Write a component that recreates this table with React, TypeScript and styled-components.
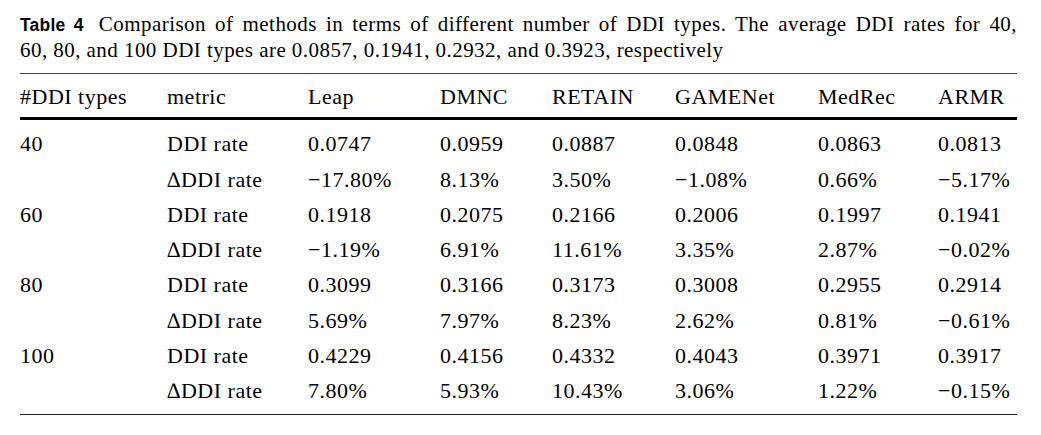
import React from "react";
import styled, { createGlobalStyle } from "styled-components";

const GlobalStyle = createGlobalStyle`
  html, body {
    margin: 0;
    padding: 0;
    background: #fff;
  }
`;

const COLS = "147px 141px 132px 112px 123px 143px 120px 79px";

const Page = styled.div`
  box-sizing: border-box;
  width: 1041px;
  padding: 12px 24px 0 20px;
  color: #000;
  font-family: "Liberation Serif", "Times New Roman", serif;
`;

const Caption = styled.div`
  font-size: 21px;
  line-height: 25px;
  letter-spacing: 0.45px;
`;

const CaptionLine = styled.div<{ $justify?: boolean }>`
  white-space: nowrap;
  text-align: ${(p) => (p.$justify ? "justify" : "left")};
  text-align-last: ${(p) => (p.$justify ? "justify" : "left")};
`;

const Label = styled.span`
  font-family: "Liberation Sans", Arial, sans-serif;
  font-weight: 700;
  font-size: 17.5px;
  letter-spacing: 0.2px;
  margin-right: 15px;
`;

const Table = styled.div`
  margin-top: 10px;
  border-top: 1px solid #444;
  border-bottom: 1px solid #222;
  font-size: 22px;
  letter-spacing: 0.5px;
`;

const Row = styled.div`
  display: grid;
  grid-template-columns: ${COLS};
  line-height: 35.3px;
`;

const Head = styled.div`
  padding: 5px 0 3px;
  border-bottom: 3px solid #000;
`;

const Body = styled.div`
  padding: 6px 0 5px;
`;

const Cell = styled.div`
  white-space: nowrap;
`;

const methods = ["Leap", "DMNC", "RETAIN", "GAMENet", "MedRec", "ARMR"];

const groups = [
  {
    n: "40",
    rate: ["0.0747", "0.0959", "0.0887", "0.0848", "0.0863", "0.0813"],
    delta: ["−17.80%", "8.13%", "3.50%", "−1.08%", "0.66%", "−5.17%"],
  },
  {
    n: "60",
    rate: ["0.1918", "0.2075", "0.2166", "0.2006", "0.1997", "0.1941"],
    delta: ["−1.19%", "6.91%", "11.61%", "3.35%", "2.87%", "−0.02%"],
  },
  {
    n: "80",
    rate: ["0.3099", "0.3166", "0.3173", "0.3008", "0.2955", "0.2914"],
    delta: ["5.69%", "7.97%", "8.23%", "2.62%", "0.81%", "−0.61%"],
  },
  {
    n: "100",
    rate: ["0.4229", "0.4156", "0.4332", "0.4043", "0.3971", "0.3917"],
    delta: ["7.80%", "5.93%", "10.43%", "3.06%", "1.22%", "−0.15%"],
  },
];

export default function App() {
  return (
    <>
      <GlobalStyle />
      <Page>
        <Caption>
          <CaptionLine $justify>
            <Label>Table 4</Label>Comparison of methods in terms of different number of DDI types. The average DDI rates for 40,
          </CaptionLine>
          <CaptionLine>
            60, 80, and 100 DDI types are 0.0857, 0.1941, 0.2932, and 0.3923, respectively
          </CaptionLine>
        </Caption>
        <Table>
          <Head>
            <Row>
              <Cell>#DDI types</Cell>
              <Cell>metric</Cell>
              {methods.map((m) => (
                <Cell key={m}>{m}</Cell>
              ))}
            </Row>
          </Head>
          <Body>
            {groups.map((g) => (
              <React.Fragment key={g.n}>
                <Row>
                  <Cell>{g.n}</Cell>
                  <Cell>DDI rate</Cell>
                  {g.rate.map((v, i) => (
                    <Cell key={i}>{v}</Cell>
                  ))}
                </Row>
                <Row>
                  <Cell />
                  <Cell>∆DDI rate</Cell>
                  {g.delta.map((v, i) => (
                    <Cell key={i}>{v}</Cell>
                  ))}
                </Row>
              </React.Fragment>
            ))}
          </Body>
        </Table>
      </Page>
    </>
  );
}
